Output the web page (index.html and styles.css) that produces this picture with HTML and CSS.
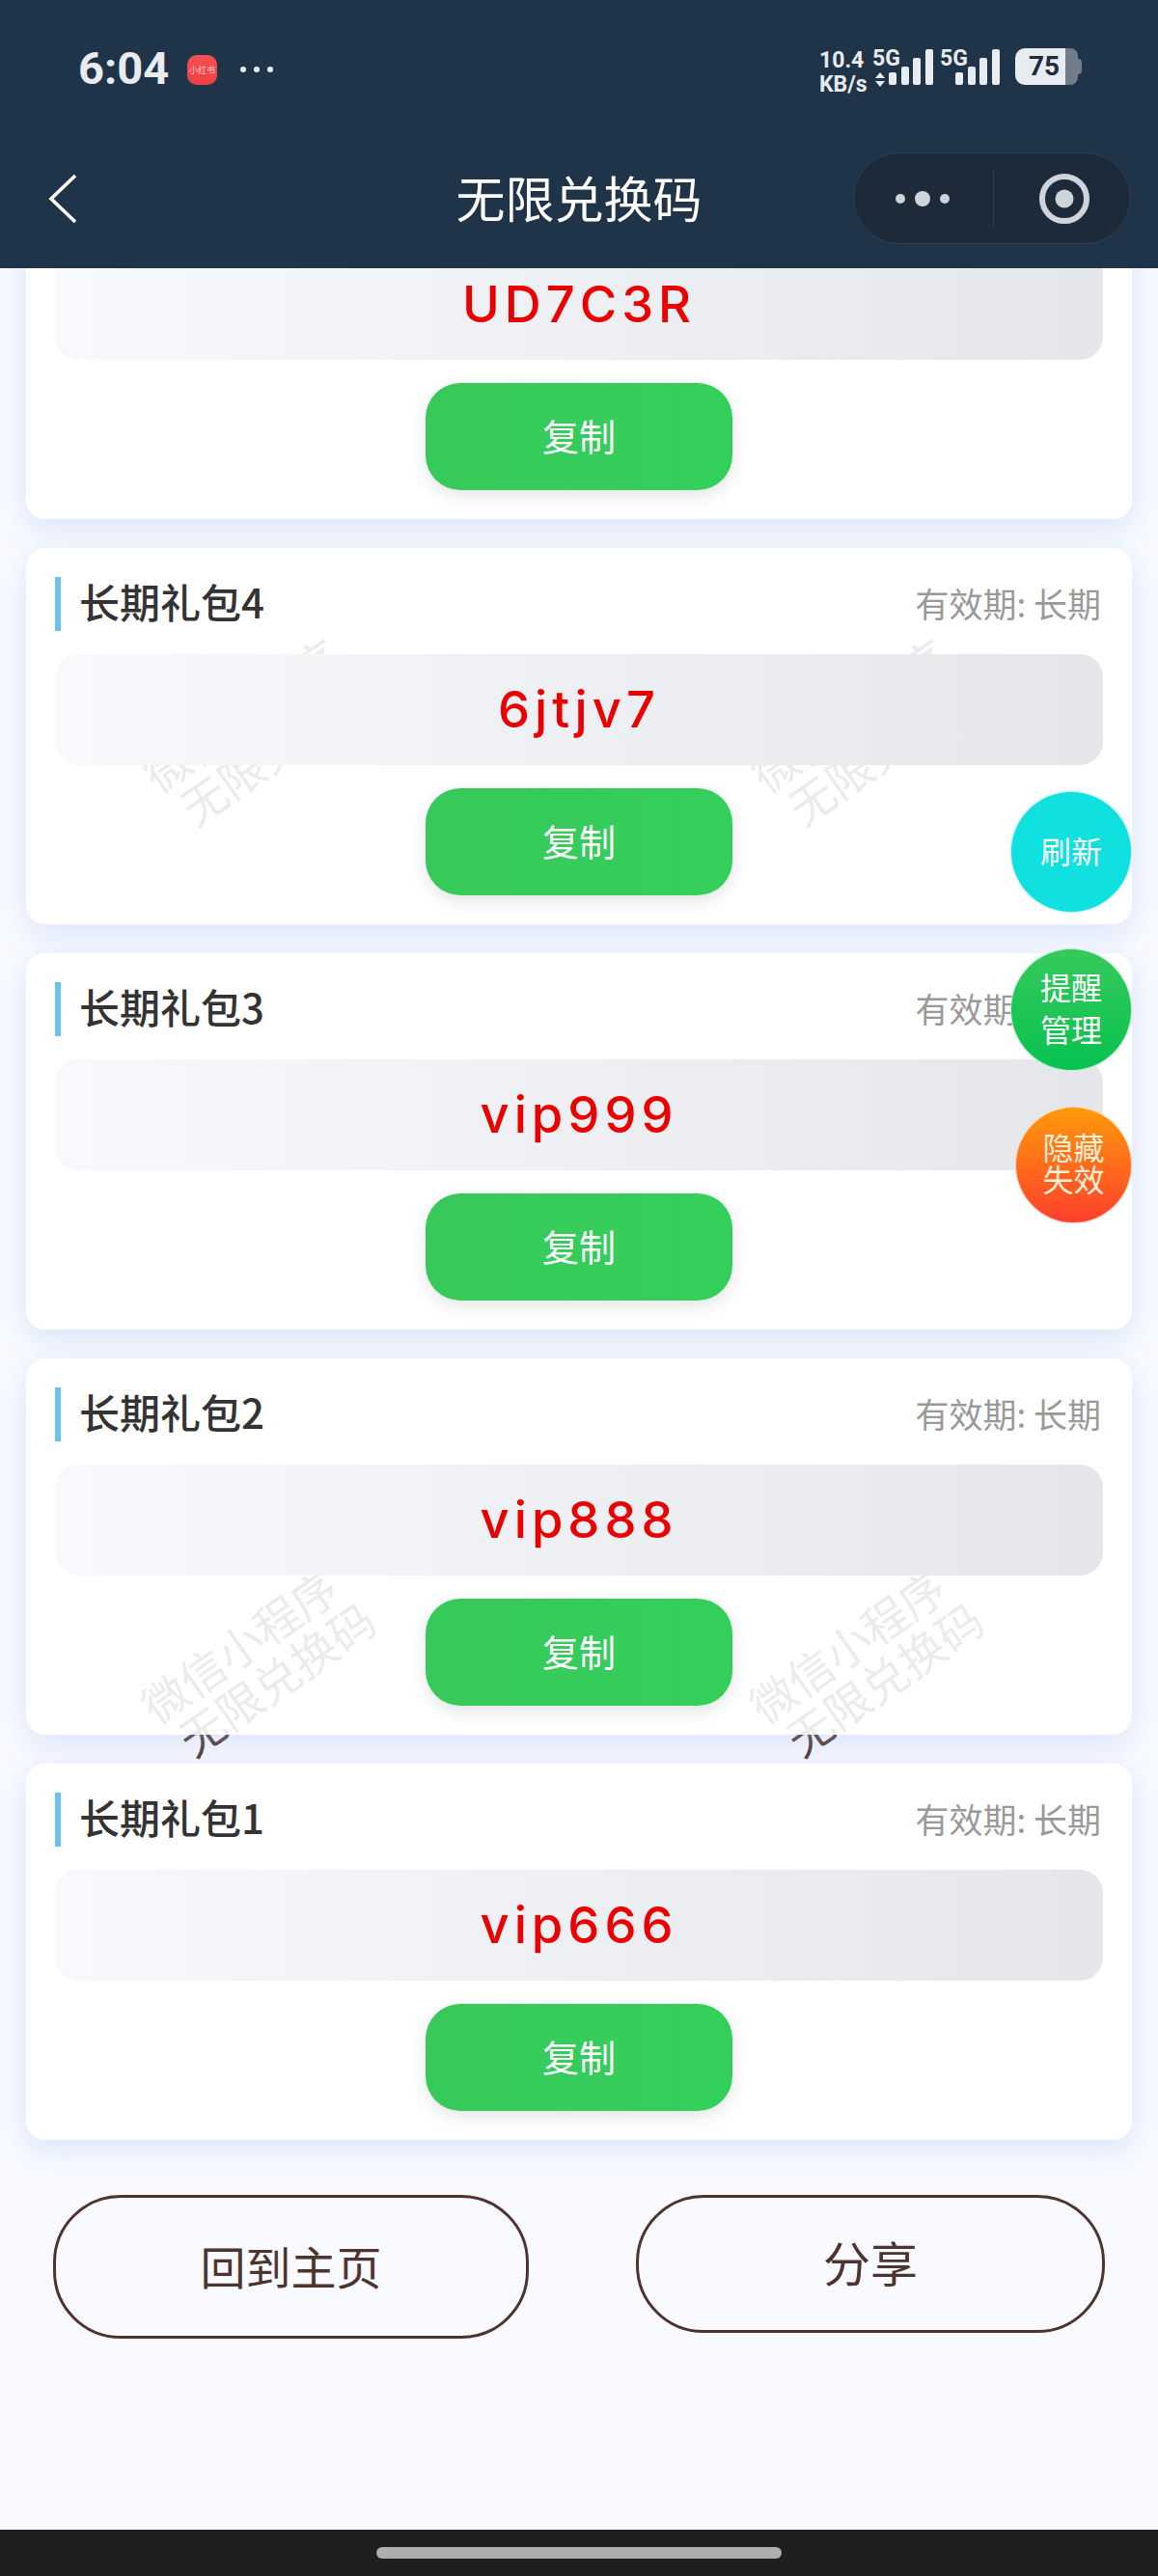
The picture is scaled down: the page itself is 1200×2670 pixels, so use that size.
FILE: index.html
```html
<!DOCTYPE html>
<html lang="zh-CN">
<head>
  <meta charset="UTF-8" />
  <meta name="viewport" content="width=device-width, initial-scale=1.0"/>
  <title>无限兑换码</title>
  <link rel="stylesheet" href="styles.css">
</head>
<body>
  <header class="header">
    <div class="status">
      <span class="time">6:04</span>
      <span class="app-icon">小红书</span>
      <span class="status-dots"><i></i><i></i><i></i></span>
      <div class="status-right">
        <div class="speed"><span>10.4</span><span>KB/s</span></div>
        <div class="net">
          <div class="net-label"><span>5G</span>
            <svg class="arrows" width="10" height="15" viewBox="0 0 10 15"><path d="M5 0L10 6H0zM5 15L0 9H10z" fill="#e8ebef"/></svg>
          </div>
          <div class="bars"><i class="b1"></i><i class="b2"></i><i class="b3"></i><i class="b4"></i></div>
        </div>
        <div class="net net-two">
          <div class="net-label"><span>5G</span></div>
          <div class="bars"><i class="b1"></i><i class="b2"></i><i class="b3"></i><i class="b4"></i></div>
        </div>
        <div class="battery"><span class="battery-level">75</span><span class="battery-rest"></span><span class="battery-tip"></span></div>
      </div>
    </div>
    <div class="nav">
      <svg class="back" width="30" height="52" viewBox="0 0 30 52"><path d="M28 2L3 26L28 50" fill="none" stroke="#fff" stroke-width="3.6"/></svg>
      <h1 class="nav-title">无限兑换码</h1>
      <div class="capsule">
        <div class="capsule-more"><i></i><i class="big"></i><i></i></div>
        <div class="capsule-line"></div>
        <svg class="capsule-target" width="54" height="54" viewBox="0 0 54 54"><circle cx="27" cy="27" r="23" fill="none" stroke="#cfd4da" stroke-width="6"/><circle cx="27" cy="27" r="9.5" fill="#cfd4da"/></svg>
      </div>
    </div>
  </header>

  <main class="main">
    <div class="wm wm-1"><span>微信小程序</span><span>无限兑换码</span></div>
    <div class="wm wm-2"><span>微信小程序</span><span>无限兑换码</span></div>
    <div class="wm wm-3"><span>微信小程序</span><span>无限兑换码</span></div>
    <div class="wm wm-4"><span>微信小程序</span><span>无限兑换码</span></div>

    <div class="list">
      <section class="card">
        <div class="card-head"><h2 class="card-title">长期礼包5</h2><span class="card-date">有效期: 长期</span></div>
        <div class="code">UD7C3R</div>
        <button class="copy">复制</button>
      </section>
      <section class="card">
        <div class="card-head"><h2 class="card-title">长期礼包4</h2><span class="card-date">有效期: 长期</span></div>
        <div class="code">6jtjv7</div>
        <button class="copy">复制</button>
      </section>
      <section class="card">
        <div class="card-head"><h2 class="card-title">长期礼包3</h2><span class="card-date">有效期: 长期</span></div>
        <div class="code">vip999</div>
        <button class="copy">复制</button>
      </section>
      <section class="card">
        <div class="card-head"><h2 class="card-title">长期礼包2</h2><span class="card-date">有效期: 长期</span></div>
        <div class="code">vip888</div>
        <button class="copy">复制</button>
      </section>
      <section class="card">
        <div class="card-head"><h2 class="card-title">长期礼包1</h2><span class="card-date">有效期: 长期</span></div>
        <div class="code">vip666</div>
        <button class="copy">复制</button>
      </section>
    </div>

    <div class="actions">
      <button class="action action-home">回到主页</button>
      <button class="action action-share">分享</button>
    </div>

    <button class="float float-refresh">刷新</button>
    <button class="float float-remind">提醒<br>管理</button>
    <button class="float float-hide">隐藏<br>失效</button>
  </main>

  <footer class="home-bar"><span class="home-pill"></span></footer>
</body>
</html>
```

FILE: styles.css
```css
* {
  box-sizing: border-box;
}
html, body {
  margin: 0;
  height: 2670px;
  overflow: hidden;
}
body {
  display: flex;
  flex-direction: column;
  background-color: #f8faff;
  font-family: "Noto Sans CJK SC", "Noto Sans", sans-serif;
}

/* top bar */
.header {
  position: relative;
  z-index: 5;
  height: 278px;
  flex: none;
  background-color: #203449;
}
.status {
  display: flex;
  align-items: flex-start;
  height: 158px;
  padding: 46px 0 0 81px;
  color: #e8ebef;
}
.time {
  font-family: "Roboto", sans-serif;
  font-size: 47px;
  font-weight: 700;
  line-height: 50px;
  width: 91px;
}
.app-icon {
  width: 31px;
  height: 31px;
  margin: 11px 0 0 22px;
  border-radius: 10px;
  background: linear-gradient(180deg, #f6504f, #ee3f43);
  color: #f7c9c9;
  font-size: 9px;
  line-height: 31px;
  text-align: center;
  white-space: nowrap;
}
.status-dots {
  display: flex;
  gap: 8px;
  margin: 23px 0 0 24px;
}
.status-dots i {
  width: 6px;
  height: 6px;
  border-radius: 50%;
  background-color: #e8ebef;
}
.status-right {
  display: flex;
  margin-left: 566px;
  margin-top: 4px;
  font-family: "Roboto", sans-serif;
  font-weight: 700;
}
.speed {
  display: flex;
  flex-direction: column;
  width: 55px;
  font-size: 23px;
  line-height: 25px;
}
.net {
  position: relative;
  width: 70px;
  height: 38px;
}
.net-two {
  width: 78px;
}
.net-label {
  display: flex;
  flex-direction: column;
  font-size: 23px;
  line-height: 22px;
}
.arrows {
  margin: 3px 0 0 3px;
}
.bars {
  position: absolute;
  left: 17px;
  bottom: 0;
  display: flex;
  align-items: flex-end;
  gap: 4.5px;
}
.net-two .bars {
  left: 16px;
}
.bars i {
  width: 8px;
  border-radius: 2px;
  background-color: #e8ebef;
}
.bars .b1 { height: 13px; }
.bars .b2 { height: 19px; }
.bars .b3 { height: 28px; }
.bars .b4 { height: 37px; }
.battery {
  display: flex;
  align-items: center;
  height: 38px;
}
.battery-level {
  width: 52px;
  height: 38px;
  padding-left: 14px;
  border-radius: 10px 0 0 10px;
  background-color: #e8ebef;
  color: #1c2c3d;
  font-size: 28px;
  line-height: 38px;
}
.battery-rest {
  width: 13px;
  height: 38px;
  border-radius: 0 8px 8px 0;
  background-color: #717d8a;
}
.battery-tip {
  width: 4px;
  height: 16px;
  border-radius: 0 4px 4px 0;
  background-color: #717d8a;
}
.nav {
  position: relative;
  height: 95px;
  display: flex;
  align-items: center;
  justify-content: center;
}
.back {
  position: absolute;
  left: 50px;
  top: 22px;
}
.nav-title {
  margin: 0;
  padding-bottom: 2px;
  color: #fff;
  font-size: 51px;
  font-weight: 400;
  line-height: 93px;
}
.capsule {
  position: absolute;
  left: 884px;
  top: 0;
  width: 288px;
  height: 95px;
  display: flex;
  align-items: center;
  border: 1px solid #2f4050;
  border-radius: 48px;
  background-color: #1c2a39;
}
.capsule-more {
  display: flex;
  align-items: center;
  gap: 10px;
  width: 144px;
  padding-left: 43px;
}
.capsule-more i {
  width: 10px;
  height: 10px;
  border-radius: 50%;
  background-color: #cfd4da;
}
.capsule-more .big {
  width: 16px;
  height: 16px;
}
.capsule-line {
  width: 1px;
  height: 58px;
  background-color: #2f4050;
}
.capsule-target {
  margin-left: 46px;
}

/* list */
.main {
  position: relative;
  flex: 1;
}
.list {
  position: relative;
  display: flex;
  flex-direction: column;
  gap: 30px;
  margin: -130px 27px 0;
}
.card {
  height: 390px;
  padding: 30px 30px 0;
  border-radius: 20px;
  background-color: rgba(255, 255, 255, 0.9);
  box-shadow: 0 10px 30px rgba(170, 190, 240, 0.35);
}
.card-head {
  display: flex;
  align-items: center;
  justify-content: space-between;
  height: 56px;
  padding-right: 2px;
  margin-bottom: 24px;
}
.card-title {
  margin: 0;
  padding: 0 0 6px 19px;
  border-left: 6px solid #68c3ee;
  color: #333;
  font-size: 42px;
  font-weight: 500;
  line-height: 50px;
}
.card-date {
  padding-bottom: 4px;
  color: #999;
  font-size: 35px;
}
.code {
  height: 115px;
  border-radius: 24px;
  background: linear-gradient(90deg, #f8f9fc, #e4e6ea);
  color: #ea0000;
  font-family: "Inter", sans-serif;
  font-size: 52.5px;
  font-weight: 500;
  letter-spacing: 5px;
  line-height: 114px;
  text-align: center;
}
.copy {
  display: block;
  width: 318px;
  height: 111px;
  margin: 24px auto 0;
  padding: 0 0 4px;
  border: 0;
  border-radius: 36px;
  background: linear-gradient(90deg, #38c85b, #34cf5b);
  box-shadow: 0 6px 18px rgba(60, 80, 70, 0.14);
  color: #fff;
  font-family: inherit;
  font-size: 38px;
}

/* watermark */
.wm {
  position: absolute;
  display: flex;
  flex-direction: column;
  color: #4e342e;
  font-size: 47px;
  line-height: 50px;
  white-space: nowrap;
  transform: rotate(-35deg);
}
.wm span:last-child {
  margin-left: 12px;
}
.wm-1 { left: 145px; top: 429px; }
.wm-2 { left: 775px; top: 429px; }
.wm-3 { left: 143px; top: 1394px; }
.wm-4 { left: 773px; top: 1394px; }

/* bottom buttons */
.actions {
  position: relative;
  display: flex;
  align-items: flex-start;
  justify-content: space-between;
  margin-top: 57px;
  padding: 0 55px;
}
.action {
  padding: 0 0 5px;
  border: 3px solid #4e342e;
  border-radius: 70px;
  background: transparent;
  color: #4e342e;
  font-family: inherit;
}
.action-home {
  width: 493px;
  height: 149px;
  font-size: 47px;
}
.action-share {
  width: 486px;
  height: 143px;
  padding-bottom: 7px;
  font-size: 49px;
}

/* floating */
.float {
  position: absolute;
  right: 27px;
  padding: 0 0 4px;
  border: 1px solid rgba(255, 255, 255, 0.7);
  border-radius: 50%;
  color: #fff;
  font-family: inherit;
  font-size: 32px;
  line-height: 44px;
}
.float-refresh {
  top: 542px;
  width: 126px;
  height: 126px;
  background-color: #10e0e0;
}
.float-remind {
  top: 705px;
  width: 126px;
  height: 127px;
  padding-bottom: 6px;
  background: linear-gradient(180deg, #36c95c, #07c24f);
}
.float-hide {
  top: 869px;
  width: 121px;
  height: 121px;
  padding-bottom: 6px;
  color: #ffefd8;
  line-height: 33px;
  background: linear-gradient(180deg, #ff9a0a, #ff3f2c);
}

.home-bar {
  flex: none;
  height: 48px;
  position: relative;
  z-index: 5;
  display: flex;
  justify-content: center;
  padding-top: 18px;
  background-color: #1f1f1f;
}
.home-pill {
  width: 420px;
  height: 12px;
  border-radius: 6px;
  background-color: #aeaeae;
}
```
